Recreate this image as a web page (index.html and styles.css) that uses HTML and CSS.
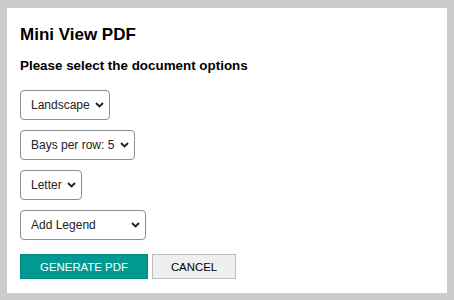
FILE: index.html
```html
<!DOCTYPE html>
<html lang="en">
<head>
    <meta charset="UTF-8">
    <meta name="viewport" content="width=device-width, initial-scale=1.0">
    <title>Mini View PDF</title>
    <link rel="stylesheet" href="styles.css">
</head>
<body>
    <div class="dialog">
        <h1>Mini View PDF</h1>
        <h2>Please select the document options</h2>
        <div class="options">
            <div class="select-wrap">
                <select>
                    <option>Landscape</option>
                    <option>Portrait</option>
                </select>
                <svg class="chevron" width="9" height="6" viewBox="0 0 9 6"><path d="M1 1l3.5 3.5L8 1" fill="none" stroke="#222" stroke-width="1.9"/></svg>
            </div>
            <div class="select-wrap">
                <select>
                    <option>Bays per row: 5</option>
                </select>
                <svg class="chevron" width="9" height="6" viewBox="0 0 9 6"><path d="M1 1l3.5 3.5L8 1" fill="none" stroke="#222" stroke-width="1.9"/></svg>
            </div>
            <div class="select-wrap">
                <select>
                    <option>Letter</option>
                    <option>A4</option>
                </select>
                <svg class="chevron" width="9" height="6" viewBox="0 0 9 6"><path d="M1 1l3.5 3.5L8 1" fill="none" stroke="#222" stroke-width="1.9"/></svg>
            </div>
            <div class="select-wrap">
                <select class="sel-legend">
                    <option>Add Legend</option>
                </select>
                <svg class="chevron" width="9" height="6" viewBox="0 0 9 6"><path d="M1 1l3.5 3.5L8 1" fill="none" stroke="#222" stroke-width="1.9"/></svg>
            </div>
        </div>
        <div class="actions">
            <button class="btn-primary">GENERATE PDF</button>
            <button class="btn-cancel">CANCEL</button>
        </div>
    </div>
</body>
</html>
```

FILE: styles.css
```css
body {
    font-family: "Liberation Sans", Arial, sans-serif;
    margin: 0;
    padding: 8px 7px 7px 7px;
    background-color: #cccccc;
    height: 300px;
    box-sizing: border-box;
}
.dialog {
    background-color: white;
    padding: 17px 13px 0 13px;
    height: 285px;
    box-sizing: border-box;
}
h1 {
    margin: 0;
    font-size: 17px;
    line-height: 20px;
    color: #000;
}
h2 {
    margin: 13px 0 0 0;
    font-size: 13.4px;
    line-height: 16px;
    color: #000;
}
.options {
    display: flex;
    flex-direction: column;
    align-items: flex-start;
    gap: 10px;
    margin-top: 16px;
}
.select-wrap {
    position: relative;
    display: inline-block;
}
select {
    appearance: none;
    -webkit-appearance: none;
    height: 30px;
    padding: 0 19px 0 10px;
    border: 1px solid #8e8e8e;
    border-radius: 4px;
    background-color: white;
    font-family: "Liberation Sans", Arial, sans-serif;
    font-size: 12px;
    color: #222;
    display: block;
}
.sel-legend { width: 126px; }
.chevron {
    position: absolute;
    right: 6px;
    top: 12px;
    pointer-events: none;
}
.actions {
    display: flex;
    gap: 4px;
    margin-top: 14px;
}
button {
    height: 25px;
    font-family: "Liberation Sans", Arial, sans-serif;
    font-size: 11.4px;
    cursor: pointer;
    padding: 0;
}
.btn-primary {
    width: 128px;
    background-color: #009a93;
    border: 1px solid #008a84;
    color: white;
}
.btn-cancel {
    width: 84px;
    background-color: #efefef;
    border: 1px solid #bdbdbd;
    color: #000;
}
```
